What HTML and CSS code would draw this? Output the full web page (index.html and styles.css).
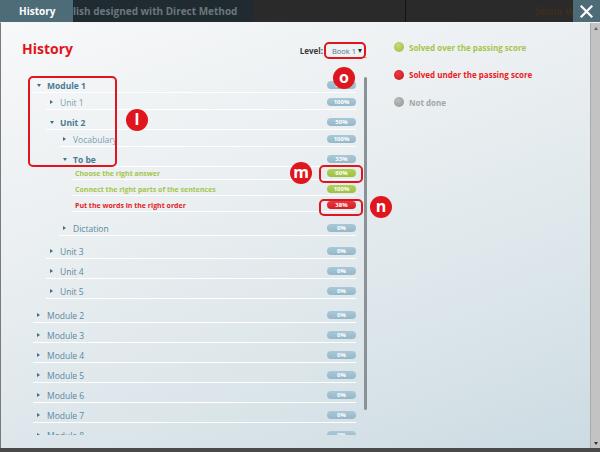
FILE: index.html
```html
<!DOCTYPE html>
<html lang="en">
  <head>
    <meta charset="UTF-8" />
    <title>History</title>
    <link rel="stylesheet" href="styles.css">
  </head>
  <body>
    <div class="topbar">
      <div class="tab">History</div>
      <div class="course">lish designed with Direct Method</div>
      <div class="bar-gap"></div>
      <div class="user">Sonia Wa</div>
      <div class="close">
        <svg width="13" height="13" viewBox="0 0 13 13">
          <path d="M1.5 1.5 L11.5 11.5 M11.5 1.5 L1.5 11.5" stroke="#fff" stroke-width="2.2" stroke-linecap="square" />
        </svg>
      </div>
    </div>

    <div class="panel">
      <div class="content">
        <div class="left">
          <div class="head">
            <h1>History</h1>
            <div class="level">
              Level:
              <span class="select">Book 1 <span class="select-arrow"></span></span>
            </div>
          </div>

          <div class="tree-wrap">
            <ul class="tree">
              <li>
                <div class="row open"><span class="caret-box"><span class="caret down"></span></span><span class="name">Module 1</span><span class="badge">33%</span></div>
                <ul class="sub units">
                  <li>
                    <div class="row done"><span class="caret-box"><span class="caret"></span></span><span class="name">Unit 1</span><span class="badge">100%</span></div>
                  </li>
                  <li>
                    <div class="row open"><span class="caret-box"><span class="caret down"></span></span><span class="name">Unit 2</span><span class="badge">50%</span></div>
                    <ul class="sub lessons">
                      <li>
                        <div class="row done"><span class="caret-box"><span class="caret"></span></span><span class="name">Vocabulary</span><span class="badge">100%</span></div>
                      </li>
                      <li>
                        <div class="row open"><span class="caret-box"><span class="caret down"></span></span><span class="name">To be</span><span class="badge">33%</span></div>
                        <ul class="sub exercises">
                          <li><div class="row ex pass"><span class="name">Choose the right answer</span><span class="badge green">60%</span></div></li>
                          <li><div class="row ex pass"><span class="name">Connect the right parts of the sentences</span><span class="badge green">100%</span></div></li>
                          <li><div class="row ex fail"><span class="name">Put the words in the right order</span><span class="badge red">38%</span></div></li>
                        </ul>
                      </li>
                      <li>
                        <div class="row"><span class="caret-box"><span class="caret"></span></span><span class="name">Dictation</span><span class="badge">0%</span></div>
                      </li>
                    </ul>
                  </li>
                  <li><div class="row"><span class="caret-box"><span class="caret"></span></span><span class="name">Unit 3</span><span class="badge">0%</span></div></li>
                  <li><div class="row"><span class="caret-box"><span class="caret"></span></span><span class="name">Unit 4</span><span class="badge">0%</span></div></li>
                  <li><div class="row"><span class="caret-box"><span class="caret"></span></span><span class="name">Unit 5</span><span class="badge">0%</span></div></li>
                </ul>
              </li>
              <li><div class="row"><span class="caret-box"><span class="caret"></span></span><span class="name">Module 2</span><span class="badge">0%</span></div></li>
              <li><div class="row"><span class="caret-box"><span class="caret"></span></span><span class="name">Module 3</span><span class="badge">0%</span></div></li>
              <li><div class="row"><span class="caret-box"><span class="caret"></span></span><span class="name">Module 4</span><span class="badge">0%</span></div></li>
              <li><div class="row"><span class="caret-box"><span class="caret"></span></span><span class="name">Module 5</span><span class="badge">0%</span></div></li>
              <li><div class="row"><span class="caret-box"><span class="caret"></span></span><span class="name">Module 6</span><span class="badge">0%</span></div></li>
              <li><div class="row"><span class="caret-box"><span class="caret"></span></span><span class="name">Module 7</span><span class="badge">0%</span></div></li>
              <li><div class="row"><span class="caret-box"><span class="caret"></span></span><span class="name">Module 8</span><span class="badge">0%</span></div></li>
            </ul>
            <div class="tree-scroll"></div>
          </div>
        </div>

        <div class="legend">
          <div class="legend-item pass"><span class="dot"></span>Solved over the passing score</div>
          <div class="legend-item fail"><span class="dot"></span>Solved under the passing score</div>
          <div class="legend-item none"><span class="dot"></span>Not done</div>
        </div>
      </div>

      <div class="page-scroll">
        <span class="arrow up"></span>
        <span class="arrow down"></span>
      </div>
    </div>

    <!-- annotations -->
    <div class="mark-box box-l"></div>
    <div class="mark-dot dot-l">l</div>
    <div class="mark-box box-o"></div>
    <div class="mark-dot dot-o">o</div>
    <div class="mark-box box-m"></div>
    <div class="mark-dot dot-m">m</div>
    <div class="mark-box box-n"></div>
    <div class="mark-dot dot-n">n</div>
  </body>
</html>
```

FILE: styles.css
```css
* {
  padding: 0;
  margin: 0;
  box-sizing: border-box;
}
body {
  position: relative;
  width: 600px;
  height: 452px;
  overflow: hidden;
  background-color: #4a4a4a;
  font-family: "Open Sans", "Noto Sans", sans-serif;
}
ul {
  list-style: none;
}

/* top bar */
.topbar {
  display: flex;
  height: 22px;
  background-color: #2a2a2a;
  font-size: 10px;
  font-weight: bold;
  line-height: 22px;
  white-space: nowrap;
}
.tab {
  width: 73px;
  padding-left: 19px;
  background-color: #4e6c77;
  color: #fff;
}
.course {
  width: 180px;
  overflow: hidden;
  background-color: #1f2b30;
  color: #6b777c;
}
.bar-gap {
  width: 153px;
  border-right: 1px solid #151515;
}
.user {
  flex: 1;
  overflow: hidden;
  padding-left: 129px;
  color: #3d2e1c;
}
.close {
  width: 27px;
  display: flex;
  align-items: center;
  justify-content: center;
  background-color: #4e6c77;
}

/* panel */
.panel {
  display: flex;
  height: 426px;
  border-top: 1px solid #f3f5f6;
  border-left: 1px solid #7a7a7a;
  background: linear-gradient(160deg, #f7f8f9 0%, #e9eef0 40%, #d9e4e9 75%, #ccdbe2 100%);
}
.content {
  flex: 1;
  display: flex;
}
.left {
  width: 375px;
  padding: 15px 9px 0 21px;
}
.head {
  display: flex;
  justify-content: space-between;
  align-items: center;
  height: 22px;
}
h1 {
  font-size: 14px;
  line-height: 22px;
  color: #e1141c;
}
.level {
  display: flex;
  align-items: center;
  padding-top: 3px;
  font-size: 8px;
  font-weight: bold;
  color: #3a3a3a;
}
.select {
  display: flex;
  align-items: center;
  margin-left: 3px;
  padding: 2px 5px 1px 6px;
  width: 41px;
  border-bottom: 1px solid #f2a24a;
  font-size: 7.5px;
  font-weight: normal;
  color: #4f7589;
  white-space: nowrap;
}
.select-arrow {
  margin-left: auto;
  border-top: 4px solid #2d2d2d;
  border-left: 2.5px solid transparent;
  border-right: 2.5px solid transparent;
}

/* tree */
.tree-wrap {
  display: flex;
  height: 362px;
  margin: 13px 0 0 11px;
}
.tree {
  width: 323px;
  height: 362px;
  overflow: hidden;
}
.tree-scroll {
  width: 3px;
  height: 333px;
  margin: 4px 0 0 8px;
  border-radius: 2px;
  background-color: #8b9296;
}
.sub {
  padding-left: 13px;
  margin-top: -3px;
}
.units {
  margin-bottom: 4px;
}
.lessons {
  margin-bottom: 3px;
}
.exercises {
  margin-bottom: 4px;
}
.row {
  display: flex;
  align-items: center;
  height: 20px;
  padding: 5px 0 0 4px;
  border-bottom: 1px solid #fff;
  font-size: 8.5px;
  color: #5a87a0;
}
.row.open {
  font-weight: bold;
  color: #4a7b93;
}
.row.done {
  color: #7a9fb2;
}
.row.ex {
  height: 16px;
  padding: 3px 0 0 3px;
  font-size: 7px;
  font-weight: bold;
}
.row.pass {
  color: #a4c64a;
}
.row.fail {
  color: #e51c25;
}
.caret-box {
  width: 10px;
  display: flex;
  align-items: center;
}
.caret {
  border-left: 3px solid #3f6f86;
  border-top: 2.5px solid transparent;
  border-bottom: 2.5px solid transparent;
}
.caret.down {
  border-top: 3px solid #3f6f86;
  border-left: 2.5px solid transparent;
  border-right: 2.5px solid transparent;
  border-bottom: 0;
}
.badge {
  margin-left: auto;
  width: 29px;
  height: 8px;
  border-radius: 4px;
  background: linear-gradient(#aac8d7, #95b8ca);
  color: #fff;
  font-size: 6px;
  font-weight: bold;
  line-height: 8px;
  text-align: center;
}
.badge.green {
  background: linear-gradient(#b3d15a, #9dc043);
}
.badge.red {
  background: linear-gradient(#e83a40, #d41c24);
}

/* legend */
.legend {
  padding: 19px 0 0 18px;
}
.legend-item {
  display: flex;
  align-items: center;
  height: 10px;
  margin-bottom: 17.5px;
  font-size: 8px;
  font-weight: bold;
}
.dot {
  width: 10px;
  height: 10px;
  margin-right: 5px;
  border-radius: 50%;
}
.legend-item.pass {
  color: #a4c64a;
}
.legend-item.pass .dot {
  background: radial-gradient(circle at 40% 35%, #c2dc72, #98bd3e);
}
.legend-item.fail {
  color: #ec1c24;
}
.legend-item.fail .dot {
  background: radial-gradient(circle at 40% 35%, #ee3a40, #c0161d);
}
.legend-item.none {
  color: #a3a6a8;
}
.legend-item.none .dot {
  background: radial-gradient(circle at 40% 35%, #bdbdbd, #939393);
}

/* page scrollbar */
.page-scroll {
  width: 10px;
  display: flex;
  flex-direction: column;
  justify-content: space-between;
  align-items: center;
  padding: 4px 0 3px;
  border-left: 1px solid #a9a9a9;
  background-color: #c3c3c3;
}
.arrow {
  border-left: 2.5px solid transparent;
  border-right: 2.5px solid transparent;
}
.arrow.up {
  border-bottom: 3px solid #666;
}
.arrow.down {
  border-top: 3px solid #333;
}

/* annotations */
.mark-box {
  position: absolute;
  border: 2px solid #e0161f;
  border-radius: 5px;
}
.mark-dot {
  position: absolute;
  width: 22px;
  height: 22px;
  border-radius: 50%;
  background-color: #e0161f;
  color: #fff;
  font-size: 16px;
  font-weight: bold;
  line-height: 20px;
  text-align: center;
}
.box-l {
  left: 28px;
  top: 76px;
  width: 89px;
  height: 91px;
}
.dot-l {
  left: 126px;
  top: 109px;
}
.box-o {
  left: 324px;
  top: 42px;
  width: 42px;
  height: 17px;
}
.dot-o {
  left: 333px;
  top: 67px;
}
.box-m {
  left: 319px;
  top: 165px;
  width: 44px;
  height: 18px;
}
.dot-m {
  left: 290px;
  top: 162px;
}
.box-n {
  left: 319px;
  top: 199px;
  width: 44px;
  height: 17px;
}
.dot-n {
  left: 370px;
  top: 196px;
}
```
